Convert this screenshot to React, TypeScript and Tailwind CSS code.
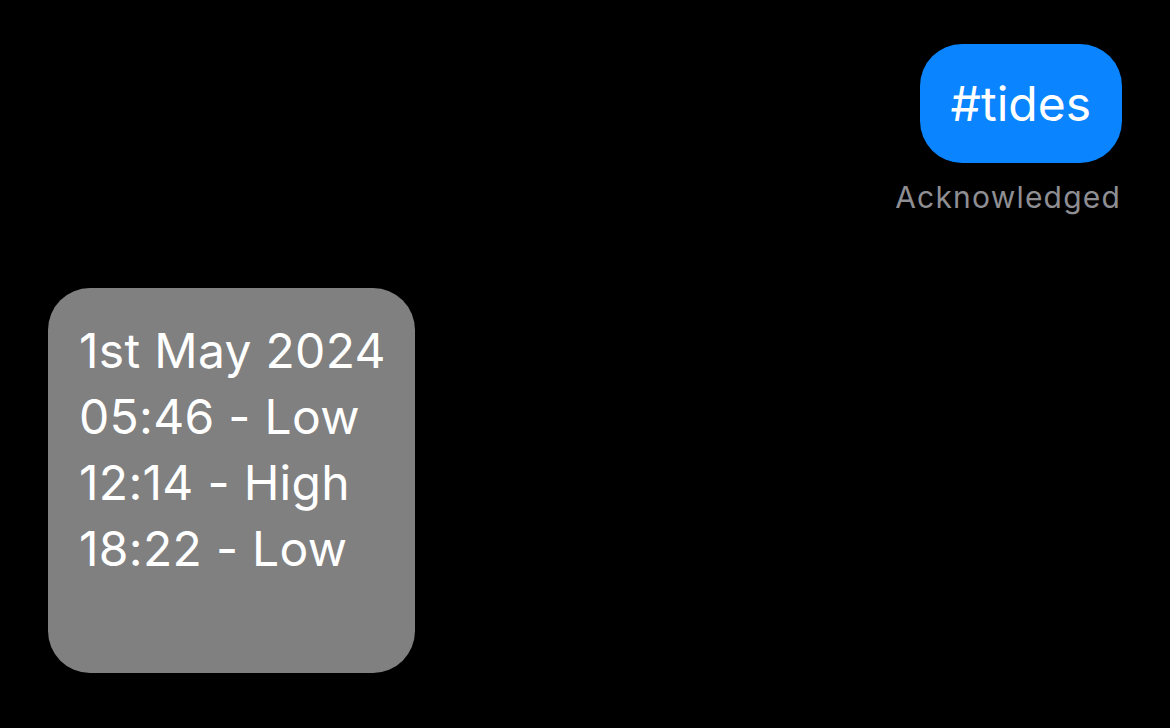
export default function App() {
  return (
    <div
      className="w-[1170px] h-[728px] bg-black overflow-hidden flex flex-col"
      style={{ fontFamily: "Inter, 'Noto Sans', sans-serif" }}
    >
      <div className="flex flex-col items-end pt-[44px] pr-[48px]">
        <div className="bg-[#0a84ff] rounded-[42px] h-[119px] px-[31px] flex items-center text-white text-[48px] leading-none">
          #tides
        </div>
        <div className="mt-[16px] mr-[1px] text-[#8e8e93] text-[30px] leading-[36px] tracking-[1.2px]">
          Acknowledged
        </div>
      </div>
      <div className="mt-[73px] ml-[48px] w-[367px] h-[385px] bg-[#808080] rounded-[42px] pl-[31px] pt-[30px] text-white text-[48px] leading-[66px] tracking-[0.3px]">
        <div>1st May 2024</div>
        <div>05:46 - Low</div>
        <div>12:14 - High</div>
        <div>18:22 - Low</div>
      </div>
    </div>
  )
}
